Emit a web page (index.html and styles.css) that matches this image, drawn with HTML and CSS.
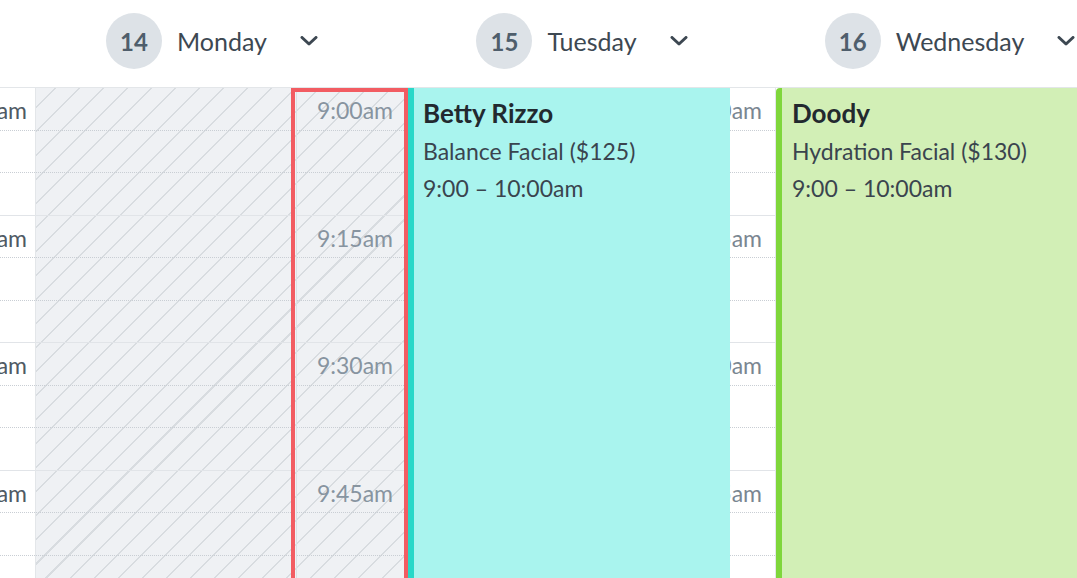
FILE: index.html
```html
<!DOCTYPE html>
<html lang="en">
<head>
<meta charset="utf-8">
<title>Calendar</title>
<link rel="stylesheet" href="styles.css">
</head>
<body>
<div class="cal">
  <div class="head">
    <div class="head-spacer"></div>
    <div class="day day-mon">
      <div class="date">14</div><div class="dname">Monday</div>
      <svg class="chev" viewBox="0 0 18 10"><path d="M2 1.5 L9 8 L16 1.5" fill="none" stroke="#3d4852" stroke-width="3" stroke-linecap="round" stroke-linejoin="round"/></svg>
    </div>
    <div class="day day-tue">
      <div class="date">15</div><div class="dname">Tuesday</div>
      <svg class="chev" viewBox="0 0 18 10"><path d="M2 1.5 L9 8 L16 1.5" fill="none" stroke="#3d4852" stroke-width="3" stroke-linecap="round" stroke-linejoin="round"/></svg>
    </div>
    <div class="day day-wed">
      <div class="date">16</div><div class="dname">Wednesday</div>
      <svg class="chev" viewBox="0 0 18 10"><path d="M2 1.5 L9 8 L16 1.5" fill="none" stroke="#3d4852" stroke-width="3" stroke-linecap="round" stroke-linejoin="round"/></svg>
    </div>
  </div>

  <div class="grid">
    <div class="col gutter-a">
      <div class="slot"><div class="sub"><div class="lbl">9:00am</div></div><div class="sub"></div><div class="sub"></div></div>
      <div class="slot"><div class="sub"><div class="lbl">9:15am</div></div><div class="sub"></div><div class="sub"></div></div>
      <div class="slot"><div class="sub"><div class="lbl">9:30am</div></div><div class="sub"></div><div class="sub"></div></div>
      <div class="slot"><div class="sub"><div class="lbl">9:45am</div></div><div class="sub"></div><div class="sub"></div></div>
    </div>

    <div class="col hatch mon-a">
      <div class="slot"><div class="sub"></div><div class="sub"></div><div class="sub"></div></div>
      <div class="slot"><div class="sub"></div><div class="sub"></div><div class="sub"></div></div>
      <div class="slot"><div class="sub"></div><div class="sub"></div><div class="sub"></div></div>
      <div class="slot"><div class="sub"></div><div class="sub"></div><div class="sub"></div></div>
    </div>

    <div class="col hatch mon-b">
      <div class="slot"><div class="sub"><div class="lbl">9:00am</div></div><div class="sub"></div><div class="sub"></div></div>
      <div class="slot"><div class="sub"><div class="lbl">9:15am</div></div><div class="sub"></div><div class="sub"></div></div>
      <div class="slot"><div class="sub"><div class="lbl">9:30am</div></div><div class="sub"></div><div class="sub"></div></div>
      <div class="slot"><div class="sub"><div class="lbl">9:45am</div></div><div class="sub"></div><div class="sub"></div></div>
    </div>

    <div class="col event ev-tue">
      <div class="ev-name">Betty Rizzo</div>
      <div class="ev-line">Balance Facial ($125)</div>
      <div class="ev-line">9:00 – 10:00am</div>
    </div>

    <div class="col gutter-b">
      <div class="slot"><div class="sub"><div class="lbl">9:00am</div></div><div class="sub"></div><div class="sub"></div></div>
      <div class="slot"><div class="sub"><div class="lbl">9:15am</div></div><div class="sub"></div><div class="sub"></div></div>
      <div class="slot"><div class="sub"><div class="lbl">9:30am</div></div><div class="sub"></div><div class="sub"></div></div>
      <div class="slot"><div class="sub"><div class="lbl">9:45am</div></div><div class="sub"></div><div class="sub"></div></div>
    </div>

    <div class="col event ev-wed">
      <div class="ev-name">Doody</div>
      <div class="ev-line">Hydration Facial ($130)</div>
      <div class="ev-line">9:00 – 10:00am</div>
    </div>
  </div>
</div>
</body>
</html>
```

FILE: styles.css
```css
* { box-sizing: border-box; }
html, body { margin: 0; padding: 0; }
body {
  width: 1077px;
  height: 578px;
  overflow: hidden;
  background: #ffffff;
  font-family: Lato, "Noto Sans", "Liberation Sans", sans-serif;
}
.cal {
  display: flex;
  flex-direction: column;
  height: 578px;
  overflow: hidden;
}

/* header */
.head {
  flex: none;
  height: 88px;
  display: flex;
  padding-bottom: 5px;
  border-bottom: 1px solid #e3e6e9;
  overflow: hidden;
}
.head-spacer { flex: none; width: 36px; }
.day {
  flex: none;
  display: flex;
  align-items: center;
  justify-content: center;
  padding-right: 20px;
}
.day-mon { width: 372px; }
.day-tue { width: 368px; }
.day-wed { width: 368px; }
.date {
  flex: none;
  width: 56px;
  height: 56px;
  border-radius: 50%;
  background: #dde2e7;
  color: #4f5e6c;
  font-weight: 700;
  font-size: 24px;
  display: flex;
  align-items: center;
  justify-content: center;
}
.dname {
  flex: none;
  margin-left: 15px;
  font-size: 25px;
  color: #3d4852;
  white-space: nowrap;
}
.chev {
  flex: none;
  margin-left: 33px;
  width: 18px;
  height: 10px;
}

/* grid */
.grid {
  flex: 1;
  min-height: 0;
  display: flex;
  overflow: hidden;
}
.col {
  flex: none;
  display: flex;
  flex-direction: column;
  overflow: hidden;
}
.slot {
  flex: none;
  height: 127.5px;
  display: flex;
  flex-direction: column;
}
.sub {
  flex: none;
  height: 42.5px;
  border-bottom: 1px dotted #c9ced4;
}
.sub:last-child { border-bottom: 1px solid #e1e4e8; }
.lbl {
  display: flex;
  justify-content: flex-end;
  padding-top: 9px;
  font-size: 23px;
  line-height: 27px;
  white-space: nowrap;
}

.gutter-a {
  width: 36px;
  border-right: 1px solid #e3e6e9;
  background: #ffffff;
}
.gutter-a .lbl { padding-right: 8px; color: #4f5a64; }

.hatch {
  background-color: #eff1f4;
  background-image: repeating-linear-gradient(135deg, rgba(0,0,0,0) 0 15.5px, #d8dce0 15.5px 17px);
  background-attachment: fixed;
}
.mon-a {
  width: 255px;
}
.mon-b {
  width: 117px;
  position: relative;
  overflow: visible;
}
.mon-b .slot {
  margin-left: 5px;
  border-left: 1px solid #dde0e4;
}
.mon-b .lbl { padding-right: 15px; color: #8794a0; }
.mon-b::after {
  content: "";
  position: absolute;
  left: 0;
  right: 0;
  top: 0;
  bottom: -10px;
  border: 4px solid #f25c62;
  pointer-events: none;
}

.event {
  padding: 10px 0 0 9px;
}
.ev-tue {
  width: 322px;
  background: #a9f4ee;
  border-left: 6px solid #27d8c8;
}
.gutter-b {
  width: 46px;
  border-right: 1px solid #e3e6e9;
  background: #ffffff;
}
.gutter-b .lbl { padding-right: 13px; color: #7a8691; }
.ev-wed {
  flex: 1 0 auto;
  width: 301px;
  background: #d2efb6;
  border-left: 6px solid #7fd63b;
  border-top-left-radius: 4px;
  padding-left: 10px;
}
.ev-name {
  font-weight: 700;
  font-size: 26px;
  line-height: 30px;
  color: #22292f;
  margin-bottom: 5px;
  white-space: nowrap;
}
.ev-line {
  font-size: 23px;
  line-height: 36.5px;
  color: #3a444e;
  white-space: nowrap;
}
```
